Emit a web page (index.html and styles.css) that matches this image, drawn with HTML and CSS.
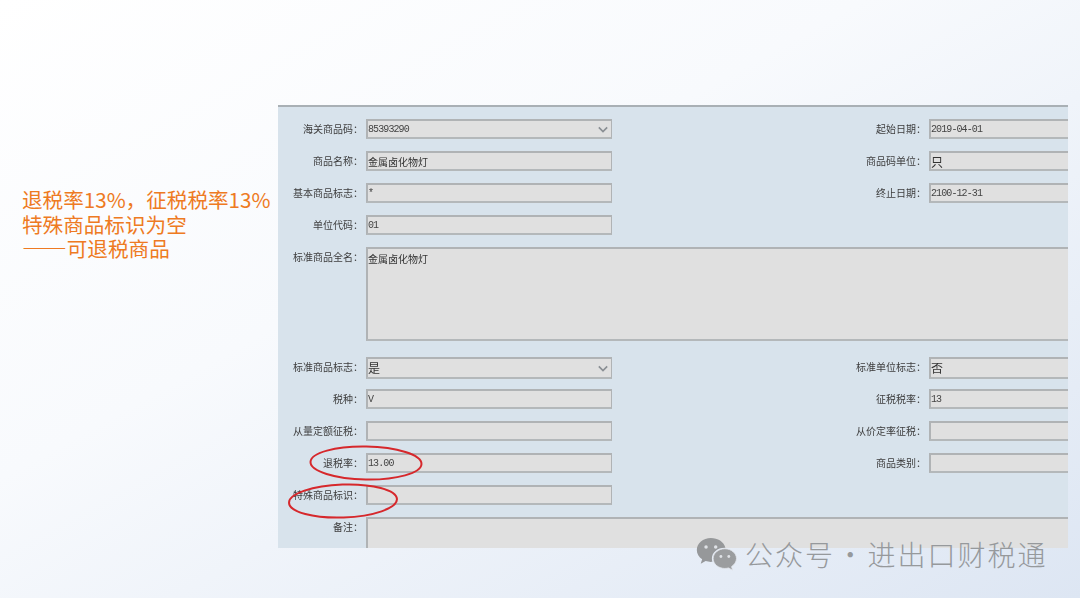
FILE: index.html
```html
<!DOCTYPE html>
<html lang="zh-CN">
<head>
<meta charset="utf-8">
<title>可退税商品</title>
<link rel="stylesheet" href="styles.css">
</head>
<body>
<main class="slide">
  <p class="note">退税率13%，征税税率13%<br>特殊商品标识为空<br><span class="dash">——</span>可退税商品</p>
  <section class="panel">
    <div class="form">
      <div class="lbl">海关商品码：</div>
      <div class="field select mono">85393290<svg class="chev" viewBox="0 0 12 8"><path d="M1 1.5 6 6.5 11 1.5"/></svg></div>
      <div class="lbl">起始日期：</div>
      <div class="field open mono">2019-04-01</div>

      <div class="lbl">商品名称：</div>
      <div class="field">金属卤化物灯</div>
      <div class="lbl">商品码单位：</div>
      <div class="field open big">只</div>

      <div class="lbl">基本商品标志：</div>
      <div class="field mono">*</div>
      <div class="lbl">终止日期：</div>
      <div class="field open mono">2100-12-31</div>

      <div class="lbl">单位代码：</div>
      <div class="field mono">01</div>
      <div class="blank"></div>

      <div class="lbl">标准商品全名：</div>
      <div class="field area">金属卤化物灯</div>

      <div class="lbl">标准商品标志：</div>
      <div class="field select big tall">是<svg class="chev" viewBox="0 0 12 8"><path d="M1 1.5 6 6.5 11 1.5"/></svg></div>
      <div class="lbl">标准单位标志：</div>
      <div class="field open big tall">否</div>

      <div class="lbl">税种：</div>
      <div class="field mono">V</div>
      <div class="lbl">征税税率：</div>
      <div class="field open mono">13</div>

      <div class="lbl">从量定额征税：</div>
      <div class="field"></div>
      <div class="lbl">从价定率征税：</div>
      <div class="field open"></div>

      <div class="lbl">退税率：</div>
      <div class="field mono">13.00</div>
      <div class="lbl">商品类别：</div>
      <div class="field open"></div>

      <div class="lbl">特殊商品标识：</div>
      <div class="field"></div>
      <div class="blank"></div>

      <div class="lbl">备注：</div>
      <div class="field area last"></div>
    </div>
  </section>
  <svg class="marks" viewBox="0 0 1080 598" aria-hidden="true">
    <ellipse cx="366" cy="463" rx="55.5" ry="16.5" transform="rotate(1 366 463)"/>
    <ellipse cx="343" cy="501" rx="54" ry="16.5" transform="rotate(-2 343 501)"/>
  </svg>
  <div class="mark">
    <svg class="wechat" viewBox="0 0 40 34" aria-hidden="true">
      <path class="b1" d="M14.5 1C6.900 1 .8 6.200.8 12.600c0 3.700 2 6.900 5.200 9.100L4.600 26l4.800-2.600c1.600.5 3.300.8 5.100.8.5 0 1 0 1.500-.1-.3-1-.5-2-.5-3.100 0-5.900 5.500-10.600 12.400-10.600h.8C27 4.600 21.300 1 14.500 1z"/>
      <circle class="eye" cx="9.800" cy="9.600" r="1.700"/>
      <circle class="eye" cx="19.200" cy="9.600" r="1.700"/>
      <path class="b2" d="M39.500 21c0-5.300-5.100-9.600-11.400-9.600S16.700 15.700 16.700 21s5.100 9.600 11.400 9.600c1.300 0 2.500-.2 3.700-.5l3.900 2.200-1-3.500c2.700-1.800 4.800-4.600 4.800-7.800z"/>
      <circle class="eye" cx="24.300" cy="18.900" r="1.400"/>
      <circle class="eye" cx="32" cy="18.900" r="1.400"/>
    </svg>
    <span class="mark-text">公众号 · 进出口财税通</span>
  </div>
</main>
</body>
</html>
```
FILE: styles.css
```css
* { box-sizing: border-box; }
html, body { margin: 0; height: 100%; }
body { overflow: hidden; }
.slide {
  position: relative;
  width: 1080px;
  height: 598px;
  padding: 105px 12px 0 22px;
  display: flex;
  align-items: flex-start;
  background: linear-gradient(to bottom right, #ffffff 0%, #f8fafd 40%, #dde6f3 100%);
  font-family: "Noto Sans CJK SC", "Noto Sans", sans-serif;
}
.note {
  width: 256px;
  flex: none;
  margin: 82px 0 0;
  font-size: 20.6px;
  font-weight: 400;
  line-height: 24.5px;
  color: #ee7a22;
  white-space: nowrap;
}
.dash { font-size: 22.4px; line-height: 0; }
.panel {
  width: 790px;
  height: 443px;
  flex: none;
  overflow: hidden;
  background: #d8e3ec;
  border-top: 2px solid #a9b0b5;
  padding-top: 12px;
  filter: blur(0.6px);
}
.form {
  display: grid;
  grid-template-columns: 88px 246px 317px 139px;
  grid-template-rows: 20px 20px 20px 20px 98px repeat(6, 20px);
  row-gap: 12px;
  font-size: 10px;
  color: #333;
}
.lbl {
  text-align: right;
  line-height: 20px;
  margin-right: 3px;
  white-space: nowrap;
  color: #3c3c3c;
}
.field {
  position: relative;
  height: 20px;
  background: #e0e0e0;
  border: 2px solid #b0b3b5;
  border-right-width: 1px;
  border-bottom-color: #b4b8ba;
  line-height: 17px;
  white-space: nowrap;
  color: #333;
}
.open { margin-right: -4px; }
.mono {
  font-family: "Liberation Mono", monospace;
  font-size: 10px;
  letter-spacing: -0.9px;
  line-height: 18px;
  color: #444;
}
.big { font-size: 12px; }
.tall { height: 22px; }
.area {
  grid-column: 2 / 5;
  height: 94px;
  margin-right: -4px;
  padding-top: 1px;
}
.last { height: 40px; border-bottom: none; }
.select .chev {
  position: absolute;
  right: 3px;
  top: 50%;
  width: 10px;
  height: 7px;
  margin-top: -3px;
}
.chev path { fill: none; stroke: #8a8f94; stroke-width: 2; }
.blank { grid-column: 3 / 5; }
.marks {
  position: absolute;
  left: 0;
  top: 0;
  width: 1080px;
  height: 598px;
  pointer-events: none;
}
.marks ellipse { fill: none; stroke: #d6282c; stroke-width: 2; }
.mark {
  position: absolute;
  left: 696px;
  top: 536px;
  display: flex;
  align-items: center;
  gap: 8px;
  height: 36px;
}
.wechat { width: 41px; height: 35px; flex: none; margin-top: 1px; }
.b1 { fill: #96989a; }
.b2 { fill: #9b9d9f; stroke: #e3e7ec; stroke-width: 0.800; }
.eye { fill: #dfe2e6; }
.mark-text {
  font-size: 28px;
  font-weight: 300;
  letter-spacing: 2px;
  word-spacing: -7px;
  color: #96999c;
  white-space: nowrap;
  line-height: 36px;
}
```
